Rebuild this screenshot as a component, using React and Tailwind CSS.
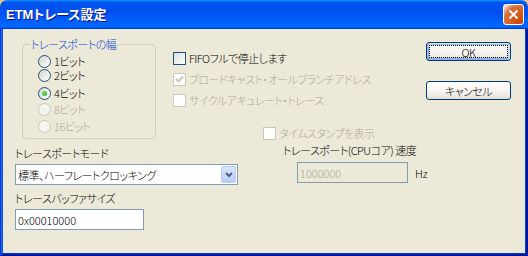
import React from 'react';

const FONT = "font-['Noto_Sans_CJK_JP',sans-serif] [font-feature-settings:'palt']";
const JP = 'text-[11px] tracking-[-0.5px] font-light';
const NUM = 'text-[11px] font-light';

const Radio = ({ label, checked, disabled, className = '' }) => (
  <div className={`flex items-center h-[13px] ${className}`}>
    <span
      className={`w-[13px] h-[13px] rounded-full border flex items-center justify-center ${
        disabled
          ? 'border-[#CAC8BB] bg-[#F5F4EF]'
          : 'border-[#1C5180] bg-[linear-gradient(135deg,#d6d5cd,#ffffff)]'
      }`}
    >
      {checked && (
        <span className="w-[5px] h-[5px] rounded-full bg-[radial-gradient(circle_at_35%_35%,#6ee86a,#21a121)]" />
      )}
    </span>
    <span className={`ml-[3px] ${JP} leading-[13px] ${disabled ? 'text-[#ACA899]' : 'text-black'}`}>
      {label}
    </span>
  </div>
);

const Check = ({ label, checked, disabled, className = '' }) => (
  <div className={`flex items-center h-[13px] ${className}`}>
    <span
      className={`w-[13px] h-[13px] border flex items-center justify-center ${
        disabled
          ? 'border-[#CAC8BB] bg-white'
          : 'border-[#1C5180] bg-[linear-gradient(135deg,#dcdcd7,#ffffff)]'
      }`}
    >
      {checked && (
        <svg width="9" height="9" viewBox="0 0 9 9">
          <path d="M1 4 L3.5 6.5 L8 1.5" fill="none" stroke={disabled ? '#CAC8BB' : '#21A121'} strokeWidth="2" />
        </svg>
      )}
    </span>
    <span className={`ml-[3px] ${JP} leading-[13px] whitespace-nowrap ${disabled ? 'text-[#ACA899]' : 'text-black'}`}>
      {label}
    </span>
  </div>
);

const XpButton = ({ children, isDefault, className = '' }) => (
  <button
    className={`w-[85px] h-[19px] rounded-[3px] border border-[#003C74] bg-[linear-gradient(180deg,#ffffff_0%,#f4f3ee_60%,#e3e0d6_100%)] ${JP} leading-[12px] text-black flex items-center justify-center ${
      isDefault
        ? 'shadow-[inset_-1px_1px_#cee7ff,inset_1px_2px_#98b8ea,inset_-2px_2px_#bcd4f6,inset_1px_-1px_#89ade4,inset_2px_-2px_#89ade4] outline-1 outline-dotted outline-black -outline-offset-4'
        : ''
    } ${className}`}
  >
    {children}
  </button>
);

export default function App() {
  return (
    <div className={`w-[528px] h-[256px] flex flex-col bg-[#E5C97A] ${FONT}`}>
      {/* タイトルバー */}
      <div className="h-[29px] shrink-0 rounded-t-[7px] flex items-center justify-between pl-[6px] pr-[4px] bg-[linear-gradient(180deg,#0997ff,#0053ee_8%,#0050ee_40%,#0066ff_88%,#0066ff_93%,#005bff_95%,#003dd7_96%,#003dd7)]">
        <span className="font-['Liberation_Sans','Noto_Sans_CJK_JP',sans-serif] text-white font-bold text-[13px] leading-[14px] [text-shadow:1px_1px_#0f1089]">
          ETMトレース設定
        </span>
        <div className="w-[21px] h-[21px] rounded-[3px] border border-white flex items-center justify-center bg-[radial-gradient(circle_at_90%_90%,#cc4600_0,#dc6527_55%,#cd7546_70%,#ffccb2_90%,#ffffff_100%)]">
          <svg width="11" height="11" viewBox="0 0 11 11">
            <path d="M1.5 1.5 L9.5 9.5 M9.5 1.5 L1.5 9.5" stroke="white" strokeWidth="2" />
          </svg>
        </div>
      </div>

      {/* 本体 */}
      <div className="flex-1 bg-[#ECE9D8] px-[3px] pb-[3px] shadow-[inset_1px_0_#0831d9,inset_-1px_0_#00138c,inset_0_-1px_#00138c,inset_2px_0_#166aee,inset_-2px_0_#001ea0,inset_0_-2px_#001ea0,inset_3px_0_#0855dd,inset_-3px_0_#003bda,inset_0_-3px_#003bda]">
        <div className="flex flex-col">
          {/* 上段 */}
          <div className="flex items-start">
            <div className="relative ml-[19px] mt-[15px] w-[134px] h-[95px] border border-[#D0D0BF] rounded-[4px] pl-[15px]">
              <span className={`absolute -top-[8px] left-[7px] px-[1px] bg-[#ECE9D8] text-[#0046D5] ${JP} leading-[14px]`}>
                トレースポートの幅
              </span>
              <div className="flex flex-col">
                <Radio label="1ビット" className="mt-[10px]" />
                <Radio label="2ビット" className="mt-[1px]" />
                <Radio label="4ビット" checked className="mt-[5px]" />
                <Radio label="8ビット" disabled className="mt-[3px]" />
                <Radio label="16ビット" disabled className="mt-[4px]" />
              </div>
            </div>

            <div className="flex flex-col ml-[17px] mt-[23px]">
              <Check label="FIFOフルで停止します" />
              <Check label="ブロードキャスト・オールブランチアドレス" checked disabled className="mt-[8px]" />
              <Check label="サイクルアキュレート・トレース" disabled className="mt-[8px]" />
              <Check label="タイムスタンプを表示" disabled className="mt-[20px] ml-[90px]" />
            </div>

            <div className="flex flex-col ml-auto mr-[14px] mt-[13px]">
              <XpButton isDefault>OK</XpButton>
              <XpButton className="mt-[20px]">キャンセル</XpButton>
            </div>
          </div>

          {/* 下段 */}
          <div className="flex items-start">
            <div className="flex flex-col ml-[12px] mt-[7px] w-[223px]">
              <span className={`${JP} leading-[12px] text-black`}>トレースポートモード</span>
              <div className="mt-[5px] h-[21px] border border-[#7F9DB9] bg-white flex items-center justify-between pl-[2px] pr-[1px]">
                <span className={`${JP} leading-[12px] text-black`}>標準、ハーフレートクロッキング</span>
                <span className="w-[15px] h-[17px] rounded-[2px] bg-[linear-gradient(180deg,#dbe6fd,#b7cbf7)] border border-[#B8CCF8] flex items-center justify-center">
                  <svg width="8" height="6" viewBox="0 0 8 6">
                    <path d="M1 1 L4 4 L7 1" fill="none" stroke="#4D6185" strokeWidth="2" />
                  </svg>
                </span>
              </div>
              <span className={`mt-[7px] ${JP} leading-[12px] text-black`}>トレースバッファサイズ</span>
              <div className="mt-[5px] w-[129px] h-[21px] border border-[#7F9DB9] bg-white flex items-center pl-[2px]">
                <span className={`${NUM} leading-[12px] text-black`}>0x00010000</span>
              </div>
            </div>

            <div className="flex flex-col ml-[45px] mt-[4px]">
              <span className={`${JP} leading-[12px] text-black whitespace-nowrap`}>トレースポート(CPUコア) 速度</span>
              <div className="flex items-center mt-[6px] ml-[14px]">
                <div className="w-[111px] h-[21px] border border-[#7F9DB9] bg-[#ECE9D8] flex items-center pl-[2px]">
                  <span className={`${NUM} leading-[12px] text-[#ACA899]`}>1000000</span>
                </div>
                <span className={`ml-[7px] ${NUM} leading-[12px] text-black`}>Hz</span>
              </div>
            </div>
          </div>
        </div>
      </div>
    </div>
  );
}
